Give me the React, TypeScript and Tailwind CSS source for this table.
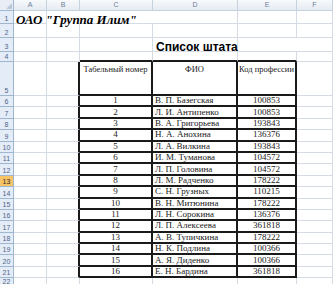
import React from "react";

const staff: [string, string][] = [
  ["В. П. Базегская", "100853"],
  ["Л. И. Антипенко", "100853"],
  ["В. А. Григорьева", "193843"],
  ["Н. А. Анохина", "136376"],
  ["Л. А. Вилкина", "193843"],
  ["И. М. Туманова", "104572"],
  ["Л. П. Головина", "104572"],
  ["Л. М. Радченко", "178222"],
  ["С. Н. Грузных", "110215"],
  ["В. Н. Митюнина", "178222"],
  ["Л. Н. Сорокина", "136376"],
  ["Л. П. Алексеева", "361818"],
  ["А. В. Тупичкина", "178222"],
  ["Н. К. Подлина", "100366"],
  ["А. Я. Диденко", "100366"],
  ["Е. Н. Бардина", "361818"],
];

const grid = "border-r border-b border-[#d5dbe5]";
const serif = "font-['Liberation_Serif',serif]";

function RowHead({ n, active }: { n: string; active?: boolean }) {
  return (
    <div
      className={`flex items-end justify-center pb-[1px] border-r border-b border-[#9eb6ce] text-[7px] leading-none font-['Liberation_Sans',sans-serif] ${
        active ? "bg-[#f6c365] text-[#2b2b2b]" : "bg-[#e4ecf7] text-[#50668a]"
      }`}
    >
      {n}
    </div>
  );
}

function Empty({ cls = grid }: { cls?: string }) {
  return <div className={cls} />;
}

export default function App() {
  return (
    <div className="w-[333px] h-[284px] overflow-hidden bg-white">
      <div className="grid grid-cols-[14px_33px_33px_73px_85px_59px_1fr] grid-rows-[11px_13px_14px_14px_10px_34px_repeat(16,11.4px)_1fr] h-[284px]">
        {/* column headers */}
        <div className="relative bg-[#e9eef6] border-r border-b border-[#9eb6ce]">
          <div className="absolute right-[1px] bottom-[1px] w-0 h-0 border-l-[6px] border-l-transparent border-b-[6px] border-b-[#b9c9da]" />
        </div>
        {["A", "B", "C", "D", "E", "F"].map((c) => (
          <div
            key={c}
            className="flex items-center justify-center bg-gradient-to-b from-[#f7f9fb] to-[#e6ebf2] border-r border-b border-[#c5d1de] text-[7px] text-[#6a7f9c] font-['Liberation_Sans',sans-serif]"
          >
            {c}
          </div>
        ))}

        {/* row 1 */}
        <RowHead n="1" />
        <div className={`${grid} relative`}>
          <span
            className={`absolute left-[2px] top-[-1px] whitespace-nowrap text-[13px] font-bold italic text-black ${serif}`}
          >
            ОАО "Группа Илим"
          </span>
        </div>
        <Empty cls="" />
        <Empty cls="border-b border-[#d5dbe5]" />
        <Empty />
        <Empty />
        <Empty />

        {/* row 2 */}
        <RowHead n="2" />
        <Empty />
        <Empty />
        <Empty />
        <Empty />
        <Empty />
        <Empty />

        {/* row 3 */}
        <RowHead n="3" />
        <Empty />
        <Empty />
        <Empty />
        <div className={`${grid} relative`}>
          <span className="absolute left-[3px] top-[0px] whitespace-nowrap text-[12px] font-bold text-black font-['Liberation_Sans',sans-serif]">
            Список штата
          </span>
        </div>
        <Empty cls="border-b border-[#d5dbe5]" />
        <Empty />

        {/* row 4 */}
        <RowHead n="4" />
        <Empty />
        <Empty cls="border-r border-b border-r-[#d5dbe5] border-b-[#d5dbe5]" />
        <Empty cls="border-r border-b-2 border-r-[#d5dbe5] border-b-[#1a1a1a]" />
        <Empty cls="border-r border-b-2 border-r-[#d5dbe5] border-b-[#1a1a1a]" />
        <Empty cls="border-r border-b-2 border-r-[#d5dbe5] border-b-[#1a1a1a]" />
        <Empty />

        {/* row 5: table header */}
        <RowHead n="5" />
        <Empty />
        <Empty cls="border-r-2 border-b border-r-[#1a1a1a] border-b-[#d5dbe5]" />
        <div className={`border-r-2 border-b-2 border-[#1a1a1a] flex justify-center pt-[3px] text-[8.5px] leading-none text-[#222] whitespace-nowrap ${serif}`}>
          Табельный номер
        </div>
        <div className={`border-r-2 border-b-2 border-[#1a1a1a] flex justify-center pt-[3px] text-[8.5px] leading-none text-[#222] ${serif}`}>
          ФИО
        </div>
        <div className={`border-r-2 border-b-2 border-[#1a1a1a] flex justify-center pt-[3px] text-[8.5px] leading-none text-[#222] whitespace-nowrap overflow-hidden ${serif}`}>
          Код профессии
        </div>
        <Empty />

        {staff.map(([name, code], i) => (
          <React.Fragment key={i}>
            <RowHead n={String(i + 6)} active={i + 6 === 13} />
            <Empty />
            <Empty cls="border-r-2 border-b border-r-[#1a1a1a] border-b-[#d5dbe5]" />
            <div className={`border-r-2 border-b-2 border-[#1a1a1a] flex items-center justify-center text-[9px] leading-none text-[#222] ${serif}`}>
              {i + 1}
            </div>
            <div className={`border-r-2 border-b-2 border-[#1a1a1a] flex items-center pl-[2px] text-[9px] leading-none text-[#222] whitespace-nowrap ${serif}`}>
              {name}
            </div>
            <div className={`border-r-2 border-b-2 border-[#1a1a1a] flex items-center justify-center text-[9px] leading-none text-[#222] ${serif}`}>
              {code}
            </div>
            <Empty />
          </React.Fragment>
        ))}

        {/* row 22 */}
        <RowHead n="22" />
        <Empty />
        <Empty />
        <Empty />
        <Empty />
        <Empty />
        <Empty />
      </div>
    </div>
  );
}
